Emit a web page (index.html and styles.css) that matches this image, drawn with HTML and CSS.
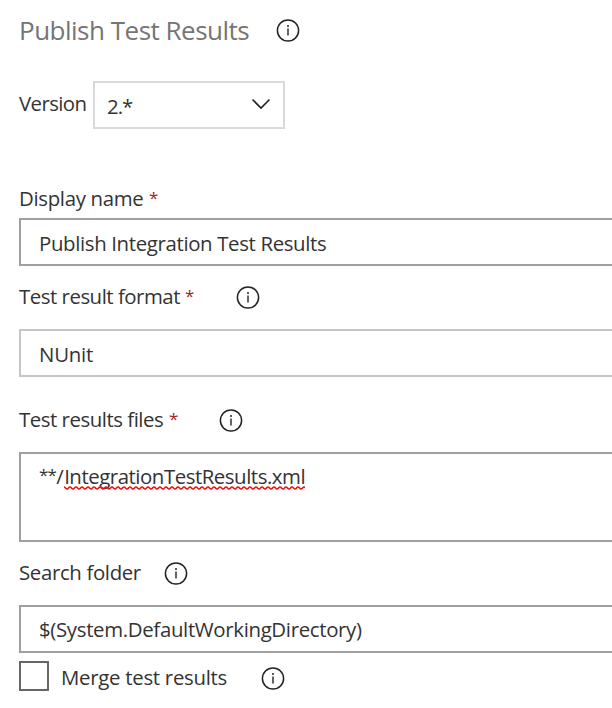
FILE: index.html
```
<!DOCTYPE html>
<html lang="en">
<head>
<meta charset="utf-8">
<title>Publish Test Results</title>
<link rel="stylesheet" href="styles.css">
</head>
<body>
<svg width="0" height="0" class="defs">
  <symbol id="info" viewBox="0 0 24 24">
    <circle cx="12" cy="12.5" r="10.6" fill="none" stroke="#222" stroke-width="1.5"/>
    <path d="M12 10.5v7" stroke="#222" stroke-width="1.4"/>
    <circle cx="12" cy="8" r="1" fill="#222"/>
  </symbol>
</svg>
<main class="panel">
  <header class="heading"><h1 class="title"><span class="t-title">Publish Test Results</span></h1><svg class="info"><use href="#info"/></svg></header>
  <div class="version">
    <span class="version-label"><span class="t-version">Version</span></span>
    <div class="select"><span class="t-num">2.*</span><svg class="chevron" viewBox="0 0 20 12"><path d="M1.5 1.5L10 10L18.5 1.5" fill="none" stroke="#222" stroke-width="1.6"/></svg></div>
  </div>
  <div class="label display"><span class="name t-display">Display name</span><span class="star">*</span></div>
  <div class="field"><span class="t-publish">Publish Integration Test Results</span></div>
  <div class="label format"><span class="name t-format">Test result format</span><span class="star">*</span><svg class="info"><use href="#info"/></svg></div>
  <div class="field light"><span class="t-nunit">NUnit</span></div>
  <div class="label files"><span class="name t-files">Test results files</span><span class="star">*</span><svg class="info"><use href="#info"/></svg></div>
  <div class="field area"><span class="t-glob">**</span><span class="t-slash">/</span><span class="misspelled t-xml">IntegrationTestResults.xml<svg class="squiggle"><defs><pattern id="wave" width="6" height="4" patternUnits="userSpaceOnUse"><path d="M-1.5 2Q0 0 1.5 2T4.5 2T7.5 2" fill="none" stroke="#f01010" stroke-width="1.5"/></pattern></defs><rect width="100%" height="4" fill="url(#wave)"/></svg></span></div>
  <div class="label search"><span class="name t-search">Search folder</span><svg class="info"><use href="#info"/></svg></div>
  <div class="field folder"><span class="t-system">$(System.DefaultWorkingDirectory)</span></div>
  <div class="merge"><span class="checkbox"></span><span class="name t-merge">Merge test results</span><svg class="info"><use href="#info"/></svg></div>
</main>
</body>
</html>
```
FILE: styles.css
```
* { box-sizing: border-box; }
body { margin: 0; background: #fff; color: #333; font: 20.4px/26px "Open Sans", "Noto Sans", sans-serif; overflow: hidden; }
.defs { display: block; }
.panel { width: 640px; height: 708px; padding: 12px 0 0 19px; white-space: nowrap; }
.info { width: 24px; height: 24px; flex: none; }
.heading { display: flex; height: 36px; align-items: center; }
.title { margin: 0; width: 257px; font-size: 26px; font-weight: 400; line-height: 36px; color: #757575; }
.version { display: flex; margin-top: 33px; height: 48px; }
.version-label { width: 74px; padding-top: 9px; }
.select { width: 192px; height: 48px; border: 2px solid #d9d9d9; padding: 10px 12px 0; display: flex; justify-content: space-between; }
.chevron { width: 20px; height: 12px; margin-top: 5px; }
.label { display: flex; height: 28px; }
.label .info { margin-top: 2px; }
.star { color: #a81e22; width: 10px; font-size: 17px; line-height: 25px; }
.display { margin: 56px 0 5px; }
.display .name { width: 130px; }
.format { margin: 17px 0 18px; }
.format .name { width: 166px; }
.format .info { margin-left: 41px; }
.files { margin: 29px 0 18px; }
.files .name { width: 150px; }
.files .info { margin-left: 40px; }
.search { margin: 17px 0 18px; }
.search .name { width: 145px; }
.field { height: 48px; border: 2px solid #a0a0a0; padding: 10px 18px 0; }
.light { border-color: #c6c6c6; }
.area { height: 90px; padding-top: 9px; }
.folder { padding-top: 9px; }
.misspelled { position: relative; }
.squiggle { position: absolute; left: 0; bottom: 0; width: 100%; height: 4px; }
.merge { display: flex; margin-top: 8px; height: 30px; }
.checkbox { width: 30px; height: 30px; border: 2px solid #666; margin-right: 12px; }
.merge .name { width: 181px; padding-top: 3px; }
.merge .info { margin: 5px 0 0 19px; }
.t-title { letter-spacing: -0.5px; }
.t-version { letter-spacing: -0.6px; }
.t-num { letter-spacing: -1px; }
.t-display { letter-spacing: -0.33px; }
.t-publish { letter-spacing: -0.35px; }
.t-format { letter-spacing: -0.48px; }
.t-nunit { letter-spacing: -0.2px; }
.t-files { letter-spacing: -0.47px; }
.t-glob { font-size: 17px; line-height: 1; letter-spacing: -0.8px; vertical-align: 3px; }
.t-slash { letter-spacing: 0.5px; }
.t-xml { letter-spacing: -0.46px; }
.t-search { letter-spacing: -0.35px; }
.t-system { letter-spacing: -0.33px; }
.t-merge { letter-spacing: -0.28px; }
```
